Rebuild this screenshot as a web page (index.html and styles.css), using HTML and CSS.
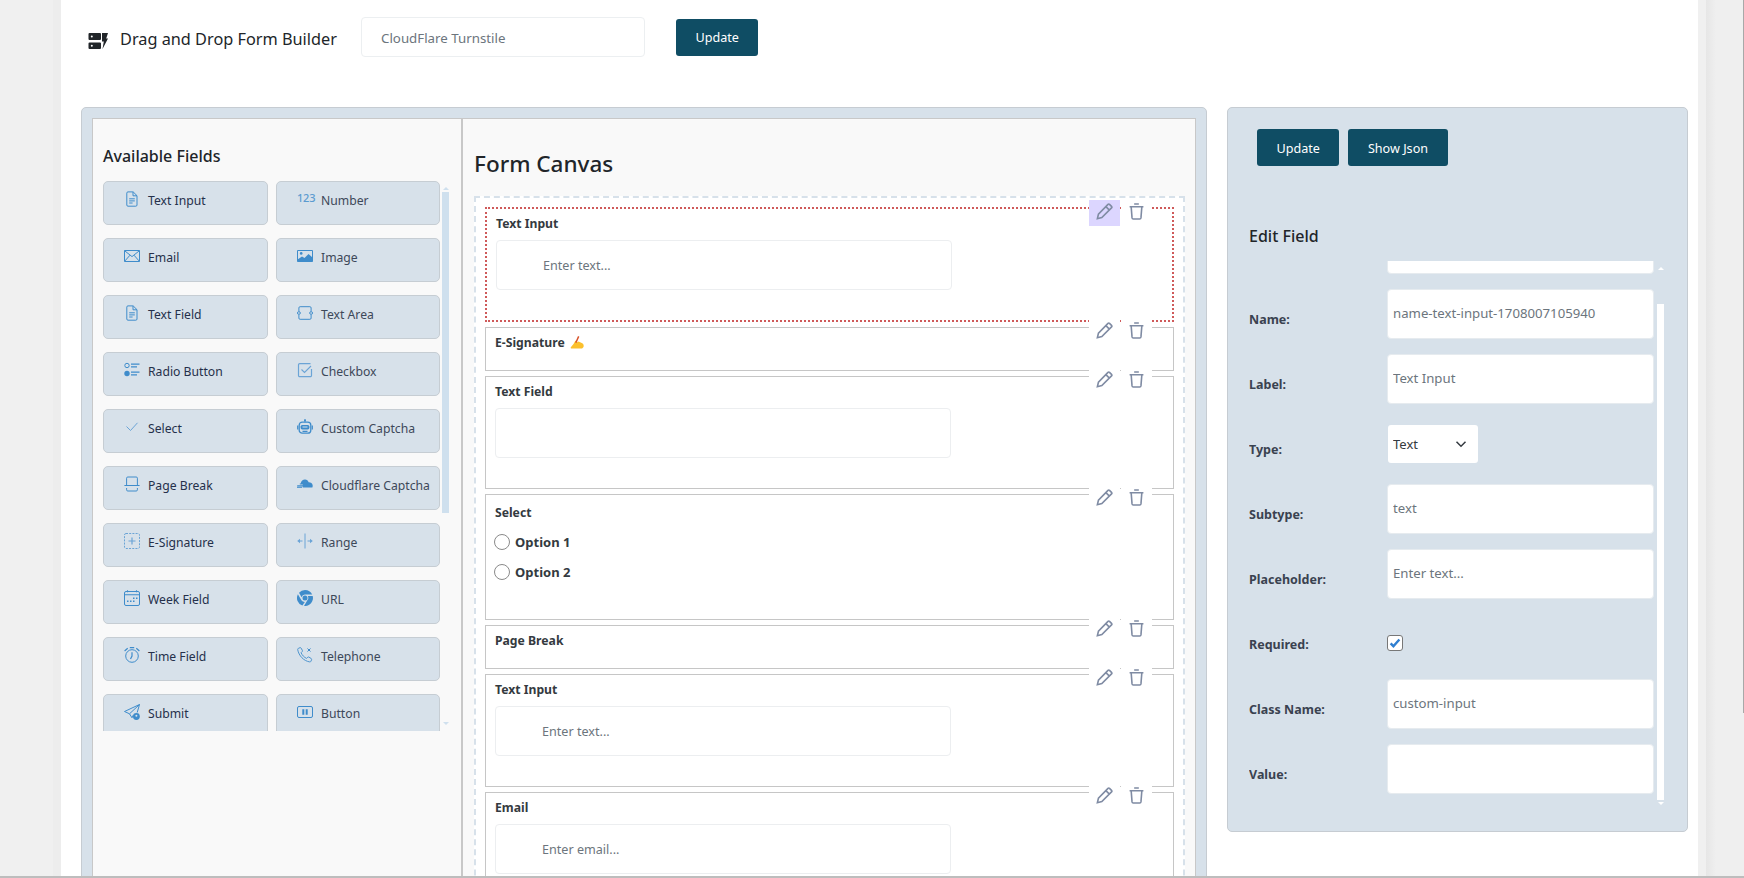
FILE: index.html
```html
<!DOCTYPE html>
<html lang="en">
<head>
  <meta charset="UTF-8">
  <meta name="viewport" content="width=device-width, initial-scale=1.0">
  <title>Drag and Drop Form Builder</title>
  <link rel="stylesheet" href="styles.css">
</head>
<body>

  <svg class="sprite" aria-hidden="true">
    <symbol id="i-doc" viewBox="0 0 16 16"><path d="M4 .9h5.2L13 4.7V14a1.2 1.2 0 0 1-1.2 1.2H4A1.2 1.2 0 0 1 2.8 14V2.1A1.2 1.2 0 0 1 4 .9zM9 1v3.8h4M5.2 7.8h5.6M5.2 9.9h5.6M5.2 12h3.4" fill="none" stroke="currentColor"/></symbol>
    <symbol id="i-mail" viewBox="0 0 16 16"><path d="M.5 2.5h15v11H.5zM.7 2.8 8 8.6l7.3-5.8M.7 13.2 6 7.2M15.3 13.2 10 7.2" fill="none" stroke="currentColor"/></symbol>
    <symbol id="i-image" viewBox="0 0 16 16"><path d="M.5 2.5h15v11H.5z" fill="none" stroke="currentColor"/><path d="M.5 11.5 5 8.5l2.5 1.6L11.5 6l4 3.5v4H.5z" fill="currentColor"/><circle cx="4.2" cy="5.4" r="1.3" fill="currentColor"/></symbol>
    <symbol id="i-textarea" viewBox="0 0 16 16"><path d="M1.900 6V2.900a1.200 1.200 0 0 1 1.200-1.200h9.800a1.200 1.200 0 0 1 1.200 1.200V6M1.900 10v3.100a1.200 1.200 0 0 0 1.200 1.200h9.800a1.200 1.200 0 0 0 1.200-1.200V10" fill="none" stroke="currentColor"/><circle cx="1.9" cy="8" r="1.4" fill="none" stroke="currentColor"/><circle cx="14.1" cy="8" r="1.4" fill="none" stroke="currentColor"/></symbol>
    <symbol id="i-radios" viewBox="0 0 16 16"><circle cx="3" cy="3.5" r="2.2" fill="none" stroke="currentColor"/><circle cx="3" cy="11.5" r="2.7" fill="currentColor"/><path d="M7 2.2h8.5M7 4.8h6M7 10.2h8.5M7 12.8h6" fill="none" stroke="currentColor" stroke-width="1.2"/></symbol>
    <symbol id="i-checkbox" viewBox="0 0 16 16"><path d="M13.5 1.6H2.7a1.2 1.2 0 0 0-1.2 1.2v10.600a1.200 1.200 0 0 0 1.200 1.200h10.600a1.200 1.200 0 0 0 1.200-1.200V7" fill="none" stroke="currentColor" stroke-width="1.2"/><path d="M4.5 7.5l3 3 6.500-6.500" fill="none" stroke="currentColor" stroke-width="1.1"/></symbol>
    <symbol id="i-check" viewBox="0 0 16 16"><path d="M2.5 7.5l4 4L13.5 3.8" fill="none" stroke="currentColor"/></symbol>
    <symbol id="i-robot" viewBox="0 0 16 16"><path d="M8 .6v2.6" stroke="currentColor" fill="none"/><circle cx="8" cy="1.2" r="1" fill="currentColor"/><rect x="2.2" y="3.2" width="11.6" height="11" rx="3" fill="none" stroke="currentColor" stroke-width="1.3"/><rect x="3.6" y="6" width="8.8" height="4.4" rx="1.6" fill="currentColor"/><path d="M5.5 8h5" stroke="#d7e1ea"/><path d="M.7 6.5v4M15.3 6.5v4M5.5 12.4h5" stroke="currentColor" fill="none" stroke-width="1.2"/></symbol>
    <symbol id="i-break" viewBox="0 0 16 16"><path d="M2.6 9V2.2a1.2 1.2 0 0 1 1.2-1.2h8.400a1.200 1.200 0 0 1 1.200 1.200V9M.4 9.500h15.200M2.600 12v1.800A1.200 1.200 0 0 0 3.800 15h8.400a1.200 1.200 0 0 0 1.200-1.200V12" fill="none" stroke="currentColor"/></symbol>
    <symbol id="i-cloud" viewBox="0 0 16 16"><path d="M3.6 7.4C4.2 4.8 6.2 3.4 8.2 3.6c1.6.1 2.8 1.2 3.4 2.6 1.9-.1 3.9 1 4.1 3.2.1.8-.2 1.700-.4 2.100H5.600l.2-1.100H.2V9.300h5.400l.2-.9H2.800V7.400z" fill="currentColor"/><path d="M0 11.3h5" stroke="currentColor" fill="none"/></symbol>
    <symbol id="i-esign" viewBox="0 0 16 16"><rect x=".5" y=".5" width="15" height="15" rx="1.5" fill="none" stroke="currentColor" stroke-dasharray="2 1.2"/><path d="M8 4.5v7M4.5 8h7" stroke="currentColor" fill="none" stroke-width="1.2"/></symbol>
    <symbol id="i-range" viewBox="0 0 16 16"><path d="M8 .5v15" stroke="currentColor" fill="none"/><path d="M.2 8 3 5.7v4.6zM15.8 8 13 5.7v4.6z" fill="currentColor"/><path d="M2.500 8h3M10.500 8h3" stroke="currentColor" fill="none"/></symbol>
    <symbol id="i-week" viewBox="0 0 16 16"><rect x=".5" y="1.5" width="15" height="14" rx="1.5" fill="none" stroke="currentColor"/><path d="M3.5.2v2M12.5.2v2M.5 4.700h15" stroke="currentColor" fill="none" stroke-width="1.1"/><path d="M9 7.500h1.500V9H9zM12 7.500h1.500V9H12zM3 10.500h1.500V12H3zM6 10.500h1.500V12H6zM9 10.500h1.500V12H9z" fill="currentColor"/></symbol>
    <symbol id="i-chrome" viewBox="0 0 16 16"><path d="M8 0a8 8 0 0 1 7.2 4.5H8.3a3.6 3.6 0 0 0-3.7 2.7L2 2.800A8 8 0 0 1 8 0zM.9 4.300l3.500 6a4 4 0 0 0 3.400 1.800l-2.400 3.500A8 8 0 0 1 .9 4.300zM15.700 6A8 8 0 0 1 7 16l3.500-5.900a3.700 3.700 0 0 0 .3-4.100zM8 5.500a2.500 2.500 0 1 1 0 5 2.500 2.500 0 0 1 0-5z" fill="currentColor"/></symbol>
    <symbol id="i-alarm" viewBox="0 0 16 16"><circle cx="8" cy="9" r="6.3" fill="none" stroke="currentColor"/><path d="M8 5.200V9L6.500 12M.6 4 3.700 1.300M15.400 4l-3.100-2.700M5.800.6h4.400" fill="none" stroke="currentColor" stroke-width="1.2"/></symbol>
    <symbol id="i-phone" viewBox="0 0 16 16"><path d="M1.400 1.300 3 .7c.5-.2.900 0 1.100.4l1.300 2.400c.2.400.1.800-.2 1.100L4.100 5.700c.8 2.300 3.200 4.800 5.500 5.700l1.200-1.200c.3-.3.800-.3 1.100-.1l2.300 1.400c.4.200.6.700.4 1.100l-.6 1.600c-.2.500-.7.800-1.300.7C6.800 14 1.800 8.800.7 2.600c-.1-.5.200-1 .7-1.300z" fill="none" stroke="currentColor" stroke-width=".9"/><path d="M10.500 1.500l3 3M13.500 1.500l-3 3" stroke="currentColor" fill="none"/></symbol>
    <symbol id="i-send" viewBox="0 0 16 16"><path d="M15.500.5.500 7.500l5 2.300 2.500 4L9.300 11M15.500.5 5.500 9.800M15.500.5l-2.300 8" fill="none" stroke="currentColor"/><circle cx="12.4" cy="12.5" r="3.4" fill="currentColor"/><circle cx="12.4" cy="11.8" r="1" fill="#d7e1ea"/></symbol>
    <symbol id="i-btn" viewBox="0 0 16 16"><rect x=".5" y="2.5" width="15" height="11" rx="1.5" fill="none" stroke="currentColor"/><path d="M5.300 5.300h2v5.400h-2zM8.700 5.300h2v5.400h-2z" fill="currentColor"/></symbol>
    <symbol id="i-pencil" viewBox="0 0 16 16"><path d="M11.300 1.300a1 1 0 0 1 1.400 0l1.900 1.900a1 1 0 0 1 0 1.400L5.500 13.700 1.300 14.800l1-4.300zM9.300 3.400l3.300 3.300" fill="none" stroke="currentColor" stroke-width="1.5"/></symbol>
    <symbol id="i-trash" viewBox="0 0 16 16"><path d="M1.500 3.600h13M5.800 1h4.400M3 3.800l.8 10.200c.1.600.5 1 1.100 1h6.200c.6 0 1-.4 1.100-1L13 3.800" fill="none" stroke="currentColor" stroke-width="1.5"/></symbol>
  </svg>

  <div class="gutter-left"></div>

  <div class="page">
    <header class="top-bar">
      <svg class="logo" viewBox="0 0 20 16">
        <path d="M1.500 0H12a1 1 0 0 1 1 1v5a1 1 0 0 1-1 1H1.500a1 1 0 0 1-1-1V1a1 1 0 0 1 1-1zM1.500 9.500H12a1 1 0 0 1 1 1v4.500a1 1 0 0 1-1 1H1.500a1 1 0 0 1-1-1v-4.500a1 1 0 0 1 1-1z" fill="#212529"/>
        <circle cx="3.8" cy="3.5" r="1" fill="#fff"/><circle cx="3.8" cy="12.7" r="1" fill="#fff"/>
        <path d="M14 0h6l-1.800 5.600H20L14.500 16l1.300-7.500H14z" fill="#212529"/>
      </svg>
      <span class="app-title">Drag and Drop Form Builder</span>
      <input class="form-name" type="text" value="CloudFlare Turnstile">
      <button class="btn">Update</button>
    </header>

    <div class="workspace">
      <section class="builder">

        <aside class="sidebar">
          <h3>Available Fields</h3>
          <div class="sidebar-scroll">
            <div class="field-grid">
              <div class="field-btn"><svg class="ico"><use href="#i-doc"/></svg>Text Input</div>
              <div class="field-btn"><span class="ico ico-num">123</span>Number</div>
              <div class="field-btn"><svg class="ico"><use href="#i-mail"/></svg>Email</div>
              <div class="field-btn"><svg class="ico"><use href="#i-image"/></svg>Image</div>
              <div class="field-btn"><svg class="ico"><use href="#i-doc"/></svg>Text Field</div>
              <div class="field-btn"><svg class="ico"><use href="#i-textarea"/></svg>Text Area</div>
              <div class="field-btn"><svg class="ico"><use href="#i-radios"/></svg>Radio Button</div>
              <div class="field-btn"><svg class="ico ico-soft"><use href="#i-checkbox"/></svg>Checkbox</div>
              <div class="field-btn"><svg class="ico ico-soft"><use href="#i-check"/></svg>Select</div>
              <div class="field-btn"><svg class="ico"><use href="#i-robot"/></svg>Custom Captcha</div>
              <div class="field-btn"><svg class="ico"><use href="#i-break"/></svg>Page Break</div>
              <div class="field-btn"><svg class="ico"><use href="#i-cloud"/></svg>Cloudflare Captcha</div>
              <div class="field-btn"><svg class="ico ico-soft"><use href="#i-esign"/></svg>E-Signature</div>
              <div class="field-btn"><svg class="ico ico-soft"><use href="#i-range"/></svg>Range</div>
              <div class="field-btn"><svg class="ico"><use href="#i-week"/></svg>Week Field</div>
              <div class="field-btn"><svg class="ico"><use href="#i-chrome"/></svg>URL</div>
              <div class="field-btn"><svg class="ico"><use href="#i-alarm"/></svg>Time Field</div>
              <div class="field-btn"><svg class="ico"><use href="#i-phone"/></svg>Telephone</div>
              <div class="field-btn"><svg class="ico"><use href="#i-send"/></svg>Submit</div>
              <div class="field-btn"><svg class="ico"><use href="#i-btn"/></svg>Button</div>
            </div>
            <div class="scrollbar sidebar-bar">
              <span class="arrow-up"></span>
              <span class="thumb"></span>
              <span class="arrow-down"></span>
            </div>
          </div>
        </aside>

        <main class="canvas">
          <h2>Form Canvas</h2>
          <div class="drop-zone">

            <div class="field field-active">
              <div class="field-actions">
                <button class="act act-on"><svg><use href="#i-pencil"/></svg></button>
                <button class="act"><svg><use href="#i-trash"/></svg></button>
              </div>
              <label>Text Input</label>
              <input class="field-input" type="text" placeholder="Enter text...">
            </div>

            <div class="field">
              <div class="field-actions">
                <button class="act"><svg><use href="#i-pencil"/></svg></button>
                <button class="act"><svg><use href="#i-trash"/></svg></button>
              </div>
              <label>E-Signature
                <svg class="hand" viewBox="0 0 14 13" role="img" aria-label="writing hand">
                  <path d="M5.500 4.500 3.500 8 .8 11.200c-.3.500 0 1.300.7 1.300h9.500c1.500 0 2.700-1.100 2.700-2.600 0-1.300-.7-2.300-1.900-2.800L8.500 5.500 7 6.200z" fill="#fbc02d"/>
                  <path d="M8.700.4 5.800 6.800" stroke="#d9542b" stroke-width="1.5" fill="none"/>
                </svg>
              </label>
            </div>

            <div class="field">
              <div class="field-actions">
                <button class="act"><svg><use href="#i-pencil"/></svg></button>
                <button class="act"><svg><use href="#i-trash"/></svg></button>
              </div>
              <label>Text Field</label>
              <input class="field-input" type="text">
            </div>

            <div class="field field-select">
              <div class="field-actions">
                <button class="act"><svg><use href="#i-pencil"/></svg></button>
                <button class="act"><svg><use href="#i-trash"/></svg></button>
              </div>
              <label>Select</label>
              <div class="options">
                <div class="option"><span class="radio"></span>Option 1</div>
                <div class="option"><span class="radio"></span>Option 2</div>
              </div>
            </div>

            <div class="field">
              <div class="field-actions">
                <button class="act"><svg><use href="#i-pencil"/></svg></button>
                <button class="act"><svg><use href="#i-trash"/></svg></button>
              </div>
              <label>Page Break</label>
            </div>

            <div class="field">
              <div class="field-actions">
                <button class="act"><svg><use href="#i-pencil"/></svg></button>
                <button class="act"><svg><use href="#i-trash"/></svg></button>
              </div>
              <label>Text Input</label>
              <input class="field-input" type="text" placeholder="Enter text...">
            </div>

            <div class="field">
              <div class="field-actions">
                <button class="act"><svg><use href="#i-pencil"/></svg></button>
                <button class="act"><svg><use href="#i-trash"/></svg></button>
              </div>
              <label>Email</label>
              <input class="field-input" type="text" placeholder="Enter email...">
            </div>

          </div>
        </main>
      </section>

      <section class="edit-panel">
        <div class="edit-actions">
          <button class="btn">Update</button>
          <button class="btn">Show Json</button>
        </div>
        <h3>Edit Field</h3>
        <div class="edit-scroll">
          <div class="edit-rows">
            <div class="row row-cut"><label></label><input class="edit-input" type="text"></div>
            <div class="row"><label>Name:</label><input class="edit-input" type="text" value="name-text-input-1708007105940"></div>
            <div class="row"><label>Label:</label><input class="edit-input" type="text" value="Text Input"></div>
            <div class="row">
              <label>Type:</label>
              <select class="edit-select"><option>Text</option></select>
            </div>
            <div class="row"><label>Subtype:</label><input class="edit-input" type="text" value="text"></div>
            <div class="row"><label>Placeholder:</label><input class="edit-input" type="text" value="Enter text..."></div>
            <div class="row">
              <label>Required:</label>
              <span class="checkbox"><svg viewBox="0 0 16 16"><path d="M3 8.500l3.200 3.200L13 4" fill="none" stroke="#2f7fd1" stroke-width="2.8"/></svg></span>
            </div>
            <div class="row"><label>Class Name:</label><input class="edit-input" type="text" value="custom-input"></div>
            <div class="row"><label>Value:</label><input class="edit-input" type="text"></div>
          </div>
          <div class="scrollbar edit-bar">
            <span class="arrow-up"></span>
            <span class="thumb"></span>
            <span class="arrow-down"></span>
          </div>
        </div>
      </section>
    </div>
  </div>

  <div class="gutter-right"><span class="window-thumb"></span></div>

</body>
</html>
```

FILE: styles.css
```css
/* General Styles */
* {
  box-sizing: border-box;
}

body {
  margin: 0;
  height: 878px;
  overflow: hidden;
  display: flex;
  background-color: #f0f0f0;
  color: #212529;
  font-family: "Noto Sans", "Open Sans", sans-serif;
  font-size: 13px;
  border-bottom: 2px solid #bdbdbd;
}

.sprite {
  display: none;
}

.gutter-left {
  width: 61px;
  flex: none;
  background: linear-gradient(to right, #f0f0f0 53px, #ededed 53px);
}

.gutter-right {
  flex: 1;
  position: relative;
  background: linear-gradient(to right, #f0f0f0 8px, #e6e6e6 8px, #efefef 18px);
}

.window-thumb {
  position: absolute;
  right: 0;
  top: 0;
  width: 1px;
  height: 713px;
  background-color: #a8a8a8;
}

.page {
  width: 1637px;
  flex: none;
  background-color: #fff;
  padding-top: 17px;
}

/* Top bar */
.top-bar {
  display: flex;
  align-items: center;
  height: 40px;
  padding-left: 27px;
  margin-bottom: 50px;
}

.logo {
  width: 20px;
  height: 16px;
  margin: 8px 12px 0 0;
}

.app-title {
  width: 217px;
  margin: 4px 24px 0 0;
  font-size: 16.3px;
  white-space: nowrap;
}

.form-name {
  width: 284px;
  height: 40px;
  margin-right: 31px;
  padding: 2px 19px 0;
  border: 1px solid #eceff1;
  border-radius: 4px;
  color: #6c757d;
  font: inherit;
  font-size: 13.3px;
}

.btn {
  height: 37px;
  padding: 1px 19.5px 0;
  border: none;
  border-radius: 3px;
  background-color: #0f4d64;
  color: #fff;
  font: inherit;
  font-size: 12.6px;
}

.workspace {
  display: flex;
  align-items: flex-start;
  gap: 20px;
  padding-left: 20px;
}

/* Builder */
.builder {
  display: flex;
  width: 1126px;
  height: 800px;
  padding: 10px 10px 0;
  background-color: #d7e1ea;
  border: 1px solid #c6ccd2;
  border-radius: 5px 5px 0 0;
}

.sidebar {
  width: 370px;
  flex: none;
  padding: 25px 0 0 10px;
  background-color: #f9f9f9;
  border: 1px solid #c8c8c8;
  border-bottom: none;
}

.sidebar h3 {
  margin: 0 0 13px;
  font-size: 16px;
  font-weight: 500;
  line-height: 24px;
}

.sidebar-scroll {
  display: flex;
  gap: 2px;
  height: 550px;
  overflow: hidden;
}

.field-grid {
  display: grid;
  grid-template-columns: 165px 164px;
  grid-auto-rows: 44px;
  gap: 13px 8px;
  width: 337px;
}

.field-btn {
  display: flex;
  align-items: flex-start;
  gap: 8px;
  padding: 9px 0 0 20px;
  background-color: #d7e1ea;
  border: 1px solid #c6cdd3;
  border-radius: 5px;
  color: #25304a;
  font-size: 12.2px;
  line-height: 20px;
  white-space: nowrap;
}

.field-btn:nth-child(even) {
  color: #3d4859;
}

.ico {
  width: 16px;
  height: 16px;
  flex: none;
  color: #3f8ccb;
}

.ico-soft {
  color: #6ba4d6;
}

.ico-num {
  margin-top: -3px;
  color: #5b9bd0;
  font-size: 11px;
  font-weight: 500;
  line-height: 20px;
  letter-spacing: -0.2px;
}

/* Scrollbars */
.scrollbar {
  display: flex;
  flex-direction: column;
  align-items: center;
  width: 7px;
  flex: none;
}

.arrow-up,
.arrow-down {
  width: 0;
  height: 0;
  border-left: 3px solid transparent;
  border-right: 3px solid transparent;
}

.arrow-up {
  border-bottom: 3px solid currentColor;
}

.arrow-down {
  margin-top: auto;
  border-top: 3px solid currentColor;
}

.thumb {
  width: 7px;
  background-color: currentColor;
}

.sidebar-bar {
  color: #cfe0ee;
}

.sidebar-bar .arrow-up {
  margin-top: 6px;
}

.sidebar-bar .thumb {
  height: 321px;
  margin-top: 2px;
}

.sidebar-bar .arrow-down {
  margin-bottom: 6px;
}

.edit-bar {
  color: #fff;
}

.edit-bar .arrow-up {
  margin-top: 6px;
}

.edit-bar .thumb {
  height: 496px;
  margin-top: 34px;
}

.edit-bar .arrow-down {
  margin-bottom: 4px;
}

/* Canvas */
.canvas {
  width: 734px;
  flex: none;
  padding: 29px 10px 0 11px;
  background-color: #f9f9f9;
  border: 1px solid #c8c8c8;
  border-bottom: none;
}

.canvas h2 {
  margin: 0 0 17px;
  font-size: 22.5px;
  font-weight: 500;
  line-height: 31px;
}

.drop-zone {
  padding: 9px 9px 0;
  height: 800px;
  background-color: #fff;
  border: 2px dashed #d7e1ea;
}

.field {
  position: relative;
  padding: 5px 9px 11px;
  margin-bottom: 5px;
  background-color: #fff;
  border: 1px solid #c6c6c6;
}

.field label {
  display: block;
  margin-bottom: 6px;
  color: #343a40;
  font-size: 12.2px;
  font-weight: 700;
  line-height: 20px;
}

.hand {
  width: 14px;
  height: 13px;
  margin-left: 2px;
  vertical-align: -2px;
}

.field-active {
  padding: 5px 9px 11px;
  border: 2px dotted #cf5a5a;
}

.field-select {
  padding-top: 8px;
}

.field-input {
  display: block;
  width: 456px;
  height: 50px;
  margin-bottom: 19px;
  padding: 0 0 0 46px;
  background-color: #fff;
  border: 1px solid #eceef0;
  border-radius: 4px;
  font: inherit;
  font-size: 12.6px;
}

.field-input::placeholder {
  color: #6c757d;
}

/* Edit / delete buttons sit over the field's top border */
.field-actions {
  position: absolute;
  top: -9px;
  right: 21px;
  display: flex;
  gap: 1px;
}

.field-active .field-actions {
  top: -9px;
  right: 20px;
}

.field-actions::after {
  content: "";
  position: absolute;
  left: 31px;
  top: 8px;
  width: 1px;
  height: 2px;
  background-color: #fff;
}

.field-active .field-actions::after {
  display: none;
}

.act {
  display: flex;
  align-items: center;
  justify-content: center;
  width: 31px;
  height: 26px;
  padding: 0 0 4px;
  background-color: #fff;
  border: none;
  color: #7f8ba3;
}

.act svg {
  width: 17px;
  height: 17px;
}

.act-on {
  background-color: #dcd6ff;
}

.options {
  margin: -2px 0 21px -1px;
}

.option {
  display: flex;
  align-items: center;
  gap: 5px;
  height: 30px;
  color: #343a40;
  font-weight: 700;
}

.radio {
  width: 16px;
  height: 16px;
  background-color: #fff;
  border: 1px solid #8a8a8a;
  border-radius: 50%;
}

/* Edit panel */
.edit-panel {
  width: 461px;
  height: 725px;
  padding: 21px 0 0 21px;
  background-color: #d7e1ea;
  border: 1px solid #c6ccd2;
  border-radius: 5px;
}

.edit-actions {
  display: flex;
  gap: 9px;
  padding-left: 8px;
}

.edit-panel h3 {
  margin: 58px 0 13px;
  font-size: 16px;
  font-weight: 500;
  line-height: 24px;
}

.edit-scroll {
  display: flex;
  gap: 3px;
  height: 548px;
  overflow: hidden;
}

.edit-rows {
  width: 405px;
}

.row {
  display: grid;
  grid-template-columns: 138px 267px;
  align-items: start;
  height: 65px;
}

.row-cut {
  margin-top: -37px;
}

.row label {
  align-self: center;
  padding-bottom: 5px;
  color: #3a4250;
  font-size: 12.5px;
  font-weight: 700;
}

.edit-input {
  height: 50px;
  padding: 0 5px 2px;
  background-color: #fff;
  border: 1px solid #e6ebef;
  border-radius: 4px;
  color: #6c757d;
  font: inherit;
  font-size: 13.2px;
}

.edit-select {
  width: 90px;
  height: 38px;
  margin: 6px 0 0 1px;
  padding: 0 5px;
  appearance: none;
  background: #fff url("data:image/svg+xml,%3Csvg xmlns='http://www.w3.org/2000/svg' viewBox='0 0 16 16'%3E%3Cpath d='M2 5l6 6 6-6' fill='none' stroke='%23343a40' stroke-width='2'/%3E%3C/svg%3E") no-repeat right 11px center / 12px 12px;
  border: none;
  border-radius: 3px;
  color: #343a40;
  font: inherit;
  font-size: 13px;
}

.checkbox {
  width: 16px;
  height: 16px;
  margin-top: 21px;
  background-color: #fff;
  border: 1px solid #777;
  border-radius: 3px;
}

.checkbox svg {
  display: block;
  width: 14px;
  height: 14px;
}
```
